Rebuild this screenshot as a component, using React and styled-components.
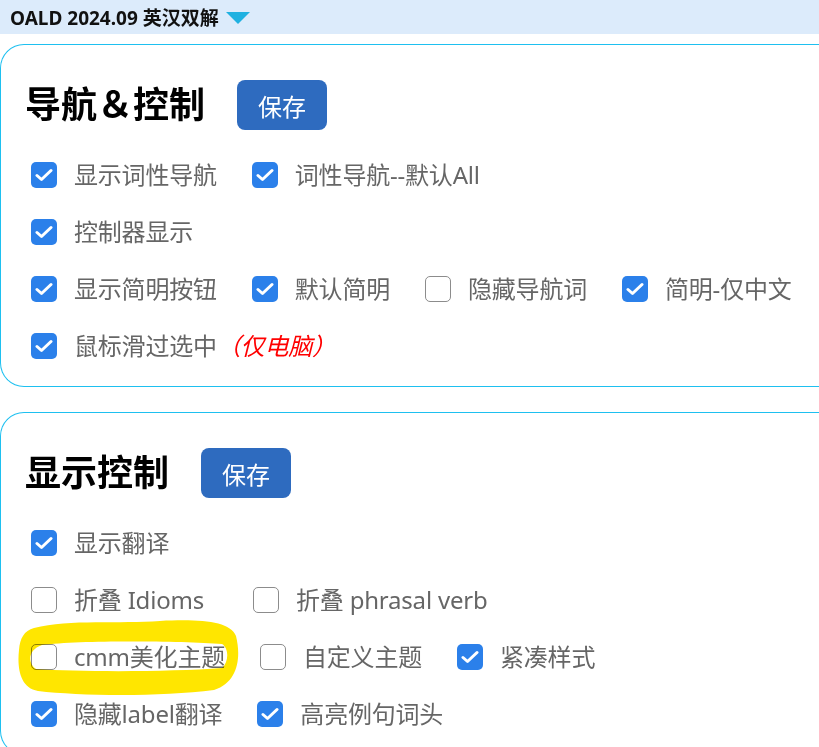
import React from 'react';
import styled, { createGlobalStyle } from 'styled-components';

const GlobalStyles = createGlobalStyle`
  html, body {
    margin: 0;
    padding: 0;
    background: #fff;
    overflow: hidden;
  }
  body {
    font-family: "Noto Sans", "Noto Sans CJK SC", sans-serif;
  }
`;

const TopBar = styled.div`
  height: 34px;
  background: #dcebfb;
  display: flex;
  align-items: center;
  padding-left: 10px;
  font-size: 19px;
  font-weight: 700;
  color: #111;
`;

const Caret = styled.span`
  display: inline-block;
  margin-left: 7px;
  margin-top: 2px;
  width: 0;
  height: 0;
  border-left: 12px solid transparent;
  border-right: 12px solid transparent;
  border-top: 12px solid #1fb1e1;
`;

const Card = styled.section`
  position: relative;
  margin-top: ${props => props.gap}px;
  width: calc(100% + 60px);
  box-sizing: border-box;
  border: 1.5px solid #1ec0f0;
  border-right: none;
  border-radius: 24px 0 0 24px;
  padding: 35px 0 12px 24px;
`;

const HeadRow = styled.div`
  display: flex;
  align-items: center;
  height: 50px;
  margin-bottom: 16px;
`;

const Title = styled.h2`
  margin: 0;
  font-size: 36px;
  font-weight: 700;
  color: #000;
  line-height: 1;
`;

const SaveButton = styled.button`
  margin-left: 32px;
  height: 50px;
  padding: 0 21px;
  border: none;
  border-radius: 8px;
  background: #2e6bbf;
  color: #fff;
  font-family: inherit;
  font-size: 24px;
  cursor: pointer;
`;

const Row = styled.div`
  display: flex;
  align-items: stretch;
  height: 57px;
  padding-left: 6px;
`;

const Item = styled.label`
  position: relative;
  display: flex;
  align-items: center;
  margin-right: 35px;
  cursor: pointer;
`;

const Box = styled.span`
  display: flex;
  align-items: center;
  justify-content: center;
  width: 26px;
  height: 26px;
  box-sizing: border-box;
  border-radius: 5px;
  background: ${props => (props.checked ? '#2b80ea' : '#fff')};
  border: ${props => (props.checked ? 'none' : '1.5px solid #8c8c8c')};
  margin-right: 17px;
`;

const Label = styled.span`
  font-size: 24px;
  color: #666;
  white-space: nowrap;
  letter-spacing: -0.2px;
  margin-top: -2px;
  min-width: ${props => props.minWidth || 0}px;
`;

const Note = styled.span`
  color: #f00;
  font-style: italic;
`;

const Scribble = styled.svg`
  position: absolute;
  left: -15px;
  top: -11px;
  pointer-events: none;
  mix-blend-mode: multiply;
`;

function Check({ checked, label, note, minWidth, marked }) {
  return (
    <Item>
      <Box checked={checked}>
        {checked && (
          <svg width="18" height="14" viewBox="0 0 18 14">
            <path d="M2 7.5 L6.5 11.5 L16 2.5" fill="none" stroke="#fff" strokeWidth="3" strokeLinecap="round" strokeLinejoin="round" />
          </svg>
        )}
      </Box>
      <Label minWidth={minWidth}>
        {label}
        {note && <Note>{note}</Note>}
      </Label>
      {marked && (
        <Scribble width="226" height="82" viewBox="16 617 226 82">
          <path
            fillRule="evenodd"
            fill="#ffe600"
            d="M34 628 C70 619 120 624 160 621 C200 619 230 621 236 636 C241 656 239 682 214 690 C160 697 80 696 38 691 C20 688 17 668 19 650 C20 638 24 631 34 628 Z
               M42 645 C80 640 180 641 222 644 C229 648 229 662 222 668 C170 672 80 672 36 669 C28 664 27 650 42 645 Z"
          />
        </Scribble>
      )}
    </Item>
  );
}

const navRows = [
  [
    { label: '显示词性导航', checked: true },
    { label: '词性导航--默认All', checked: true },
  ],
  [{ label: '控制器显示', checked: true }],
  [
    { label: '显示简明按钮', checked: true },
    { label: '默认简明', checked: true },
    { label: '隐藏导航词', checked: false },
    { label: '简明-仅中文', checked: true },
  ],
  [{ label: '鼠标滑过选中', checked: true, note: '（仅电脑）' }],
];

const displayRows = [
  [{ label: '显示翻译', checked: true }],
  [
    { label: '折叠 Idioms', checked: false, minWidth: 144 },
    { label: '折叠 phrasal verb', checked: false },
  ],
  [
    { label: 'cmm美化主题', checked: false, marked: true },
    { label: '自定义主题', checked: false },
    { label: '紧凑样式', checked: true },
  ],
  [
    { label: '隐藏label翻译', checked: true },
    { label: '高亮例句词头', checked: true },
  ],
];

function Panel({ title, rows, gap }) {
  return (
    <Card gap={gap}>
      <HeadRow>
        <Title>{title}</Title>
        <SaveButton>保存</SaveButton>
      </HeadRow>
      {rows.map((row, i) => (
        <Row key={i}>
          {row.map(item => (
            <Check key={item.label} {...item} />
          ))}
        </Row>
      ))}
    </Card>
  );
}

export default function App() {
  return (
    <>
      <GlobalStyles />
      <TopBar>
        OALD 2024.09 英汉双解
        <Caret />
      </TopBar>
      <Panel title="导航＆控制" rows={navRows} gap={10} />
      <Panel title="显示控制" rows={displayRows} gap={25} />
    </>
  );
}
